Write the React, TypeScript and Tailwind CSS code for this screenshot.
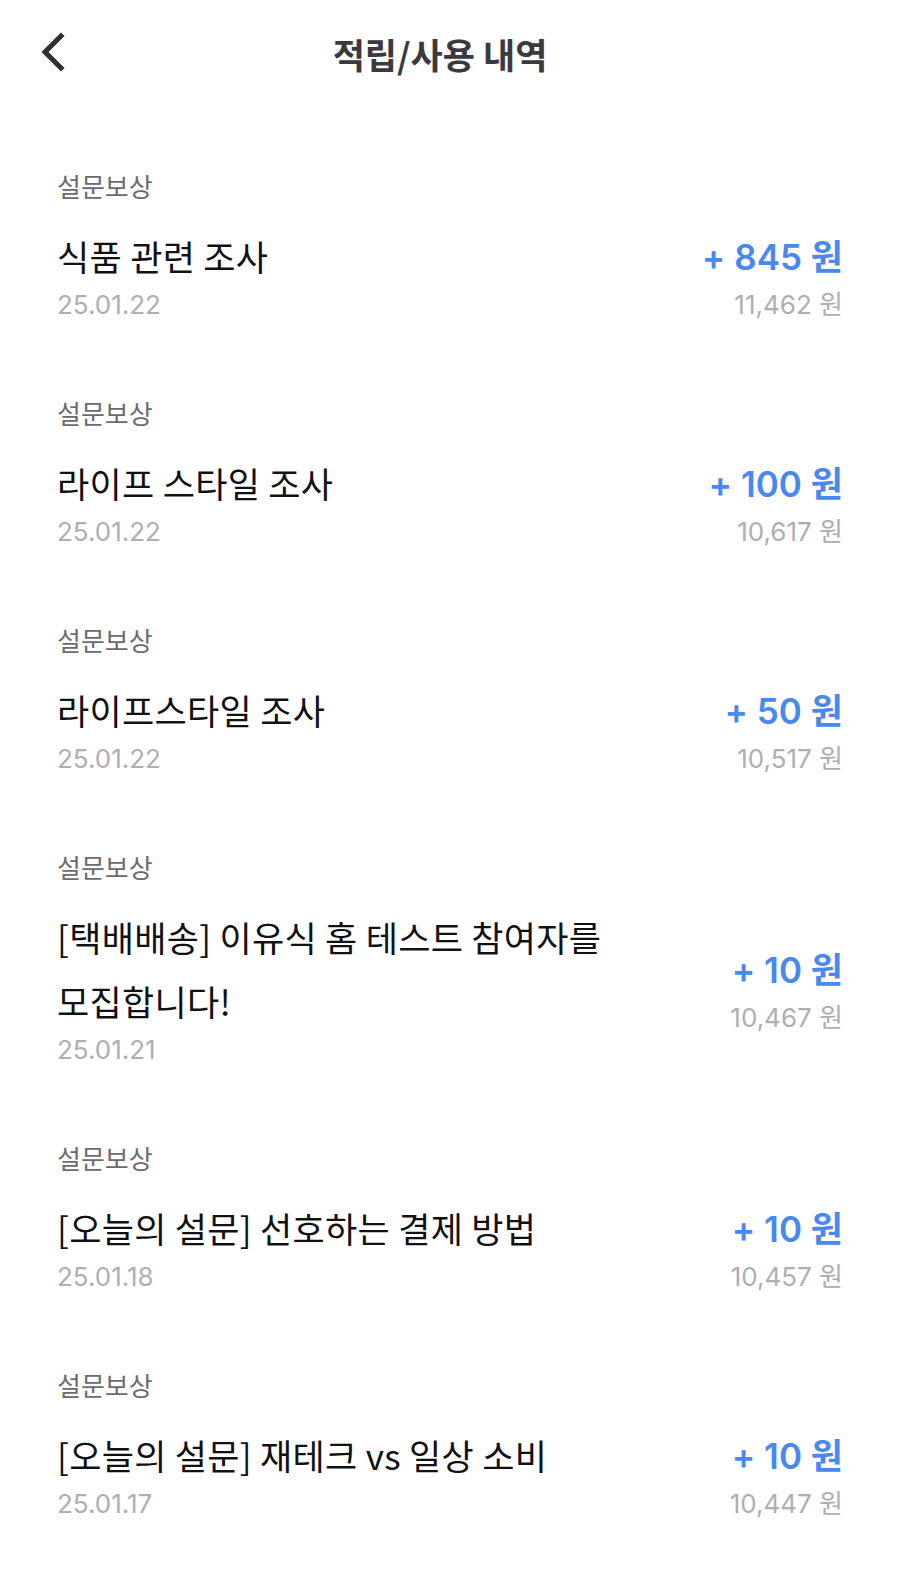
const items = [
  { title: "식품 관련 조사", date: "25.01.22", amount: "845", balance: "11,462" },
  { title: "라이프 스타일 조사", date: "25.01.22", amount: "100", balance: "10,617" },
  { title: "라이프스타일 조사", date: "25.01.22", amount: "50", balance: "10,517" },
  { title: "[택배배송] 이유식 홈 테스트 참여자를 모집합니다!", date: "25.01.21", amount: "10", balance: "10,467" },
  { title: "[오늘의 설문] 선호하는 결제 방법", date: "25.01.18", amount: "10", balance: "10,457" },
  { title: "[오늘의 설문] 재테크 vs 일상 소비", date: "25.01.17", amount: "10", balance: "10,447" },
];

const kr = { fontFamily: '"Noto Sans CJK KR", "Noto Sans", sans-serif' };
const num = { fontFamily: 'Inter, "Noto Sans CJK KR", sans-serif' };

export default function App() {
  return (
    <div className="w-[900px] min-h-[1576px] bg-white" style={kr}>
      {/* header */}
      <div className="relative h-[106px] flex items-center justify-center pr-5">
        <button className="absolute left-[36px] top-[30px] w-[32px] h-[44px] flex items-center justify-center">
          <svg width="30" height="42" viewBox="0 0 30 42" fill="none">
            <path d="M24 5 L8 21 L24 37" stroke="#2f3033" strokeWidth="5" strokeLinecap="square" strokeLinejoin="miter" />
          </svg>
        </button>
        <h1 className="text-[35px] font-semibold text-[#3a3a3e] leading-none">적립/사용 내역</h1>
      </div>

      {/* list */}
      <div className="pt-[26px]">
        {items.map((it, i) => (
          <div key={i} className="py-[37px] pl-[57px] pr-[57px]">
            <div className="text-[26px] leading-[34px] text-[#6b6b70]">설문보상</div>
            <div className="mt-[21px] flex items-center gap-10">
              <div className="flex-1 min-w-0">
                <div className="text-[35px] leading-[64px] tracking-[0.3px] text-[#111113] break-keep">{it.title}</div>
                <div className="text-[26px] leading-[34px] text-[#aeaeb3]" style={num}>{it.date}</div>
              </div>
              <div className="translate-y-2 flex flex-col items-end shrink-0" style={num}>
                <div className="text-[35px] leading-[48px] font-semibold text-[#4a88f0]">+ {it.amount} 원</div>
                <div className="text-[26px] leading-[48px] text-[#aeaeb3]">{it.balance} 원</div>
              </div>
            </div>
          </div>
        ))}
      </div>
    </div>
  );
}
